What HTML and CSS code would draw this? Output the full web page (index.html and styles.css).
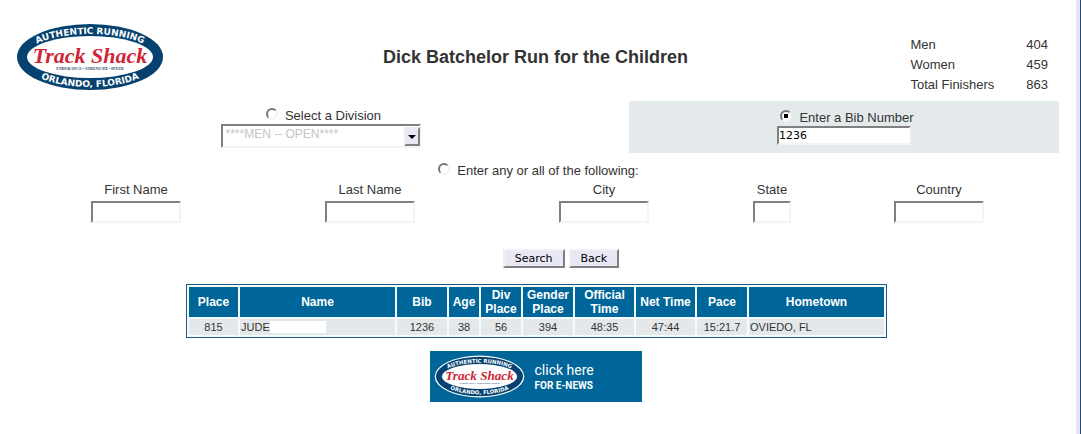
FILE: index.html
```html
<!DOCTYPE html>
<html lang="en">
<head>
<meta charset="utf-8">
<title>Dick Batchelor Run for the Children</title>
<link rel="stylesheet" href="styles.css">
</head>
<body>
<svg class="defs" aria-hidden="true">
  <defs>
    <path id="arc-top" d="M11 36 A65 23 0 0 1 141 36"/>
    <path id="arc-bottom" d="M6 36 A70 30 0 0 0 146 36"/>
  </defs>
  <symbol id="logo" class="logo-art" viewBox="0 0 152 72">
    <ellipse class="logo-halo" cx="76" cy="36" rx="75" ry="35"/>
    <ellipse class="logo-ring" cx="76" cy="36" rx="73" ry="33"/>
    <ellipse class="logo-face" cx="76" cy="36" rx="63" ry="21"/>
    <text class="logo-band"><textPath href="#arc-top" startOffset="50%">AUTHENTIC RUNNING</textPath></text>
    <text class="logo-band"><textPath href="#arc-bottom" startOffset="50%">ORLANDO, FLORIDA</textPath></text>
    <text class="logo-name" x="76" y="42">Track Shack</text>
    <text class="logo-motto" x="76" y="49">ENDURANCE • STRENGTH • SPEED</text>
  </symbol>
</svg>
<main class="page">
  <header class="masthead">
    <svg class="logo" role="img" aria-label="Track Shack"><use href="#logo"/></svg>
    <h1 class="title">Dick Batchelor Run for the Children</h1>
    <dl class="totals">
      <dt>Men</dt><dd>404</dd>
      <dt>Women</dt><dd>459</dd>
      <dt>Total Finishers</dt><dd>863</dd>
    </dl>
  </header>
  <form class="search">
    <div class="choices">
      <div class="choice">
        <label class="option"><input class="radio" type="radio" name="mode">Select a Division</label>
        <span class="dropdown">
          <select class="field division" aria-label="Division" disabled><option>****MEN -- OPEN****</option></select>
          <span class="arrow"></span>
        </span>
      </div>
      <div class="choice choice-active">
        <label class="option"><input class="radio" type="radio" name="mode" checked>Enter a Bib Number</label>
        <input class="field bib" type="text" value="1236" aria-label="Bib number">
      </div>
    </div>
    <label class="option option-any"><input class="radio" type="radio" name="mode">Enter any or all of the following:</label>
    <div class="fields">
      <label class="entry">First Name<input class="field" type="text"></label>
      <label class="entry">Last Name<input class="field" type="text"></label>
      <label class="entry">City<input class="field" type="text"></label>
      <label class="entry">State<input class="field field-short" type="text"></label>
      <label class="entry">Country<input class="field" type="text"></label>
    </div>
    <div class="actions">
      <button class="button" type="submit">Search</button>
      <button class="button" type="button">Back</button>
    </div>
  </form>
  <table class="results">
    <colgroup>
      <col class="w-first"><col class="w-name"><col class="w-place"><col class="w-age"><col class="w-div"><col class="w-place"><col class="w-time"><col class="w-time"><col class="w-place"><col class="w-home">
    </colgroup>
    <thead>
      <tr><th>Place</th><th>Name</th><th>Bib</th><th>Age</th><th>Div Place</th><th>Gender Place</th><th>Official Time</th><th>Net Time</th><th>Pace</th><th>Hometown</th></tr>
    </thead>
    <tbody>
      <tr><td>815</td><td class="text"><span class="person">JUDE<span class="masked"></span></span></td><td>1236</td><td>38</td><td>56</td><td>394</td><td>48:35</td><td>47:44</td><td>15:21.7</td><td class="text">OVIEDO, FL</td></tr>
    </tbody>
  </table>
  <a class="banner" href="#">
    <svg class="banner-logo" role="img" aria-label="Track Shack"><use href="#logo"/></svg>
    <span class="banner-text">
      <span class="banner-lead">click here</span>
      <span class="banner-sub">FOR E-NEWS</span>
    </span>
  </a>
</main>
</body>
</html>
```
FILE: styles.css
```css
* { box-sizing: border-box; }

body {
  margin: 0;
  min-height: 100vh;
  display: flex;
  background: #fff;
  border-right: 1px solid #24496e;
  font: 12px/20px "Liberation Sans", Arial, sans-serif;
  color: #333;
}

.defs { position: absolute; width: 0; height: 0; }

.page {
  flex: 1;
  display: flex;
  flex-direction: column;
  padding: 21px 17px 0 12px;
  border-right: 4px solid #e8e4f4;
}

/* Masthead */
.masthead {
  display: grid;
  grid-template-columns: 1fr auto 1fr;
  align-items: center;
  height: 80px;
}
.logo, .banner-logo, .logo-art { overflow: visible; }
.logo { width: 152px; height: 72px; margin: 0 0 8px 2px; }
.logo-halo, .logo-face { fill: #fff; }
.logo-ring { fill: #05426f; }
.logo-band { font: bold 9px "DejaVu Sans", sans-serif; fill: #fff; text-anchor: middle; }
.logo-name { font: italic bold 22px "Liberation Serif", "Times New Roman", serif; fill: #cf2638; text-anchor: middle; }
.logo-motto { font: bold 4px "Liberation Serif", serif; fill: #24496e; text-anchor: middle; }

.title { margin: 0; font-size: 18px; line-height: 24px; padding-bottom: 8px; }

.totals {
  justify-self: end;
  display: grid;
  grid-template-columns: auto auto;
  column-gap: 32px;
  margin: 8px 11px 0 0;
  font-size: 13px;
}
.totals dd { margin: 0; text-align: right; }

/* Search form */
.choices { display: grid; grid-template-columns: 617fr 430fr; }
.choice {
  display: flex;
  flex-direction: column;
  align-items: center;
  height: 52px;
  padding-top: 6px;
}
.choice-active { background: #e4eaec; padding-top: 8px; }

.option {
  display: flex;
  align-items: center;
  gap: 7px;
  padding-left: 6px;
  font-size: 13px;
  line-height: 17px;
}
.option-any { justify-content: center; margin-top: 9px; }

.radio {
  appearance: none;
  width: 12px;
  height: 12px;
  margin: 0 0 4px;
  border: 2px solid;
  border-color: #777 #f4f4f4 #f4f4f4 #777;
  border-radius: 50%;
  background: #fff;
}
.radio:checked { background: linear-gradient(#000, #000) center / 4px 4px no-repeat #fff; }

.field {
  appearance: none;
  display: block;
  width: 90px;
  height: 22px;
  margin: 0;
  padding: 0;
  border: 2px solid;
  border-color: #808080 #f4f4f6 #f4f4f6 #808080;
  border-radius: 0;
  background: #fff;
  font: 11px "DejaVu Sans", sans-serif;
  color: #000;
}
.field-short { width: 38px; }
.bib { width: 134px; height: 19px; }

.dropdown { position: relative; }
.division {
  width: 200px;
  height: 24px;
  padding: 0 20px 4px 3px;
  font: 12px "Liberation Sans", Arial, sans-serif;
  color: #c4c4c4;
  opacity: 1;
}
.arrow {
  position: absolute;
  top: 3px;
  right: 1px;
  display: grid;
  place-items: center;
  width: 16px;
  height: 19px;
  border: 2px solid;
  border-color: #eceaf6 #808080 #808080 #eceaf6;
  background: #e8e8f4;
  pointer-events: none;
}
.arrow::before {
  content: "";
  border: 4px solid transparent;
  border-top-color: #000;
  border-bottom: 0;
}

.fields {
  display: grid;
  grid-template-columns: 234fr 234fr 234fr 102fr 232fr;
  padding: 1px 4px 0 7px;
  font-size: 13px;
}
.entry { display: flex; flex-direction: column; align-items: center; gap: 1px; }

.actions { display: flex; justify-content: center; gap: 4px; margin: 26px 0 16px; padding-left: 51px; }
.button {
  height: 19px;
  padding: 0 10px;
  border: 2px solid;
  border-color: #f0eff8 #808080 #808080 #f0eff8;
  background: #e8e8f4;
  font: 11px/14px "DejaVu Sans", sans-serif;
  color: #000;
}

/* Results */
.results {
  align-self: center;
  table-layout: fixed;
  width: 701px;
  margin-left: 2px;
  border: 1px solid #1b5a7d;
  border-spacing: 2px;
  background: #f2fcfc;
  font-size: 11px;
  line-height: 16px;
}
.w-first { width: 49px; }
.w-place { width: 50px; }
.w-name { width: 155px; }
.w-age { width: 30px; }
.w-div { width: 40px; }
.w-time { width: 59px; }
.results th {
  padding: 1px 0;
  background: #069;
  color: #fff;
  font-size: 12px;
  line-height: 14px;
}
.results td { padding: 0; background: #e4e8ea; text-align: center; }
.results .text { padding-left: 1px; text-align: left; }
.person { display: flex; align-items: center; }
.masked { width: 56px; height: 12px; background: #fff; }

/* Newsletter banner */
.banner {
  align-self: center;
  display: flex;
  align-items: center;
  gap: 10px;
  width: 212px;
  height: 51px;
  margin-top: 13px;
  padding-left: 4px;
  background: #069;
  color: #fff;
  text-decoration: none;
}
.banner-logo { width: 91px; height: 43px; }
.banner-text { display: flex; flex-direction: column; font-family: "Roboto", sans-serif; }
.banner-lead { font-size: 14px; line-height: 18px; }
.banner-sub { font-size: 10px; line-height: 14px; font-weight: bold; }
```
